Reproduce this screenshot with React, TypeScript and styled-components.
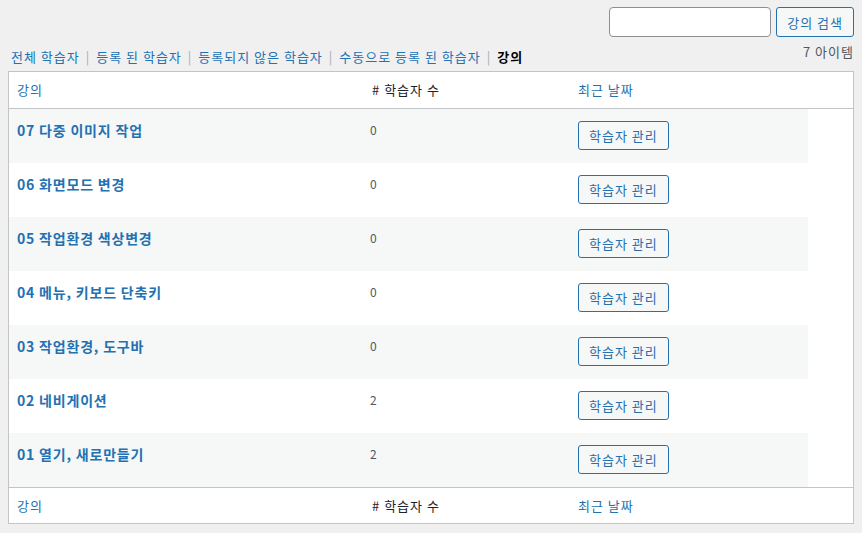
import React from "react";
import styled, { createGlobalStyle } from "styled-components";

const colors = {
  bg: "#f0f0f1",
  white: "#ffffff",
  stripe: "#f6f7f7",
  blue: "#2271b1",
  text: "#1d2327",
  muted: "#50575e",
  border: "#c3c4c7",
  inputBorder: "#8c8f94",
};

const courses = [
  { title: "07 다중 이미지 작업", learners: 0 },
  { title: "06 화면모드 변경", learners: 0 },
  { title: "05 작업환경 색상변경", learners: 0 },
  { title: "04 메뉴, 키보드 단축키", learners: 0 },
  { title: "03 작업환경, 도구바", learners: 0 },
  { title: "02 네비게이션", learners: 2 },
  { title: "01 열기, 새로만들기", learners: 2 },
];

const filters = ["전체 학습자", "등록 된 학습자", "등록되지 않은 학습자", "수동으로 등록 된 학습자"];

const GlobalStyle = createGlobalStyle`
  html, body {
    margin: 0;
    background: ${colors.bg};
    font-family: "Noto Sans CJK KR", "Noto Sans", sans-serif;
    font-size: 13px;
    letter-spacing: 1px;
    color: ${colors.text};
  }
`;

const Page = styled.div`
  padding: 7px 8px 0 8px;
`;

const SearchBox = styled.div`
  display: flex;
  justify-content: flex-end;
  gap: 5px;
`;

const SearchInput = styled.input`
  box-sizing: border-box;
  width: 162px;
  height: 30px;
  border: 1px solid ${colors.inputBorder};
  border-radius: 4px;
  background: ${colors.white};
  margin: 0;
`;

const Button = styled.button<{ $small?: boolean }>`
  box-sizing: border-box;
  height: ${(p) => (p.$small ? "29px" : "30px")};
  padding: 0 10px;
  border: 1px solid ${colors.blue};
  border-radius: 3px;
  background: ${colors.stripe};
  color: ${colors.blue};
  font-family: inherit;
  font-size: 13px;
  letter-spacing: 1px;
  line-height: 1;
  cursor: pointer;
  margin: 0;
`;

const NavRow = styled.div`
  display: flex;
  justify-content: space-between;
  align-items: flex-start;
  margin-top: 3px;
  height: 31px;
`;

const Filters = styled.ul`
  display: flex;
  list-style: none;
  margin: 8px 0 0 3px;
  padding: 0;
  line-height: 18px;
`;

const FilterItem = styled.li<{ $current?: boolean }>`
  color: ${(p) => (p.$current ? "#000" : colors.blue)};
  font-weight: ${(p) => (p.$current ? 700 : 400)};
  &:not(:last-child)::after {
    content: "|";
    color: #a7aaad;
    margin: 0 6px;
  }
`;

const Count = styled.div`
  margin-top: 3px;
  line-height: 18px;
  color: ${colors.muted};
`;

const Table = styled.div`
  box-sizing: border-box;
  width: 846px;
  background: ${colors.white};
  border: 1px solid ${colors.border};
  box-shadow: 0 1px 1px rgba(0, 0, 0, 0.04);
`;

const HeadRow = styled.div<{ $foot?: boolean }>`
  display: grid;
  grid-template-columns: 353px 208px 1fr;
  height: ${(p) => (p.$foot ? "35px" : "36px")};
  align-items: center;
  border-${(p) => (p.$foot ? "top" : "bottom")}: 1px solid ${colors.border};
`;

const HeadCell = styled.div<{ $sortable?: boolean }>`
  padding: 0 8px;
  color: ${(p) => (p.$sortable ? colors.blue : colors.text)};
  line-height: 18px;
`;

const BodyRow = styled.div<{ $striped?: boolean }>`
  display: grid;
  grid-template-columns: 353px 208px 1fr;
  width: 799px;
  height: 54px;
  background: ${(p) => (p.$striped ? colors.stripe : colors.white)};
`;

const Cell = styled.div`
  padding: 11px 8px 0;
`;

const Title = styled.a`
  display: block;
  color: ${colors.blue};
  font-weight: 700;
  font-size: 14px;
  letter-spacing: 0.8px;
  line-height: 20px;
  text-decoration: none;
`;

const Num = styled.div`
  color: ${colors.muted};
  font-size: 12px;
  line-height: 20px;
`;

const ActionCell = styled.div`
  padding: 12px 8px 0;
`;

const Header = ({ foot }: { foot?: boolean }) => (
  <HeadRow $foot={foot}>
    <HeadCell $sortable>강의</HeadCell>
    <HeadCell>
      <span style={{ marginLeft: 2 }}># 학습자 수</span>
    </HeadCell>
    <HeadCell $sortable>최근 날짜</HeadCell>
  </HeadRow>
);

export default function App() {
  return (
    <Page>
      <GlobalStyle />
      <SearchBox>
        <SearchInput type="search" />
        <Button>강의 검색</Button>
      </SearchBox>
      <NavRow>
        <Filters>
          {filters.map((f) => (
            <FilterItem key={f}>{f}</FilterItem>
          ))}
          <FilterItem $current>강의</FilterItem>
        </Filters>
        <Count>7 아이템</Count>
      </NavRow>
      <Table>
        <Header />
        {courses.map((c, i) => (
          <BodyRow key={c.title} $striped={i % 2 === 0}>
            <Cell>
              <Title href="#">{c.title}</Title>
            </Cell>
            <Cell>
              <Num>{c.learners}</Num>
            </Cell>
            <ActionCell>
              <Button $small>학습자 관리</Button>
            </ActionCell>
          </BodyRow>
        ))}
        <Header foot />
      </Table>
    </Page>
  );
}
